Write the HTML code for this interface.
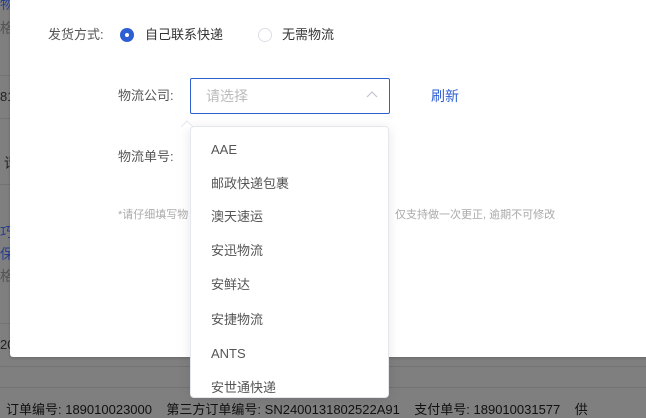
<!DOCTYPE html>
<html><head><meta charset="utf-8"><style>
*{margin:0;padding:0;box-sizing:border-box}
body{width:646px;height:414px;overflow:hidden;position:relative;background:#7f7f7f;font-family:"Liberation Sans","Noto Sans CJK SC",sans-serif;font-size:13px;color:#333}
.a{position:absolute;white-space:nowrap;line-height:16px}
.bgline{position:absolute;left:0;width:646px;height:1px;background:#737373}
.modal{position:absolute;left:10px;top:0;width:640px;height:357px;background:#fff;border-radius:0 0 3px 3px;box-shadow:0 1px 3px rgba(0,0,0,.2)}
.radio{position:absolute;width:14px;height:14px;border-radius:50%}
.dd{position:absolute;left:190px;top:126px;width:199px;height:272px;background:#fff;border:1px solid #e4e7ed;border-radius:4px;box-shadow:0 2px 12px rgba(0,0,0,.1)}
.dd div{position:absolute;left:20px;font-size:13px;color:#555;line-height:16px;white-space:nowrap}
</style></head><body>
<div class="a" style="left:0;top:-4px;color:#2a3f8f;font-size:14px">物</div>
<div class="a" style="left:0;top:20px;color:#555;font-size:14px">格</div>
<div class="bgline" style="top:75px"></div>
<div class="a" style="left:0;top:89px;color:#222;font-size:13px">81</div>
<div class="bgline" style="top:118px"></div>
<div class="a" style="left:4px;top:155px;color:#222;font-size:14px">请</div>
<div class="bgline" style="top:184px"></div>
<div class="a" style="left:0;top:224px;color:#2a3f8f;font-size:14px">巧</div>
<div class="a" style="left:0;top:246px;color:#2a3f8f;font-size:14px">保</div>
<div class="a" style="left:0;top:268px;color:#555;font-size:14px">格</div>
<div class="bgline" style="top:323px"></div>
<div class="a" style="left:0;top:337px;color:#222;font-size:13px">20</div>
<div class="bgline" style="top:366px"></div>
<div class="bgline" style="top:387px"></div>
<div class="a" style="left:6px;top:402px;color:#111;font-size:13px">订单编号: 189010023000 &nbsp;&nbsp; 第三方订单编号: SN2400131802522A91 &nbsp;&nbsp; 支付单号: 189010031577 &nbsp;&nbsp; 供</div>
<div class="modal"></div>
<div class="a" style="left:48px;top:27px;color:#555">发货方式:</div>
<div class="radio" style="left:120px;top:28px;background:#2d5fd3"><div style="position:absolute;left:5px;top:5px;width:4px;height:4px;border-radius:50%;background:#fff"></div></div>
<div class="a" style="left:145px;top:27px;color:#333">自己联系快递</div>
<div class="radio" style="left:258px;top:28px;border:1px solid #dcdfe6"></div>
<div class="a" style="left:282px;top:27px;color:#333">无需物流</div>
<div class="a" style="left:118px;top:88px;color:#555">物流公司:</div>
<div style="position:absolute;left:190px;top:78px;width:200px;height:36px;border:1px solid #2d5fd3;border-radius:2px"></div>
<div class="a" style="left:206px;top:88px;color:#bbb;font-size:14px">请选择</div>
<svg class="a" style="left:365px;top:90px" width="14" height="10"><path d="M2 7L7 2L12 7" fill="none" stroke="#c0c4cc" stroke-width="1.2"/></svg>
<div class="a" style="left:431px;top:88px;color:#2d5fd3;font-size:14px">刷新</div>
<div class="a" style="left:118px;top:149px;color:#555">物流单号:</div>
<div class="a" style="left:118px;top:207px;color:#aaa;font-size:11px">*请仔细填写物</div>
<div class="a" style="left:395px;top:207px;color:#aaa;font-size:11px">仅支持做一次更正, 逾期不可修改</div>
<div class="dd">
<div style="top:15px">AAE</div>
<div style="top:49px">邮政快递包裹</div>
<div style="top:82px">澳天速运</div>
<div style="top:116px">安迅物流</div>
<div style="top:150px">安鲜达</div>
<div style="top:185px">安捷物流</div>
<div style="top:219px">ANTS</div>
<div style="top:253px">安世通快递</div>
</div>
<svg class="a" style="left:178px;top:119px" width="20" height="9"><path d="M3 8L9 2L15 8" fill="#fff" stroke="#e4e7ed"/></svg>
</body></html>
